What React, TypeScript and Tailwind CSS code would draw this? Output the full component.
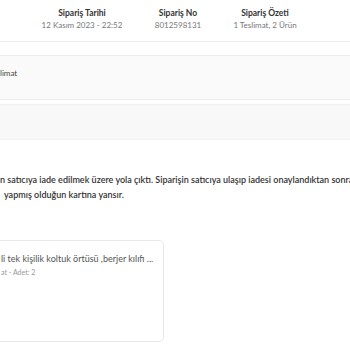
export default function App() {
  const cols = [
    { label: "Sipariş Tarihi", value: "12 Kasım 2023 - 22:52", w: "w-[96px]" },
    { label: "Sipariş No", value: "8012598131", w: "w-[96px]" },
    { label: "Sipariş Özeti", value: "1 Teslimat, 2 Ürün", w: "w-[78px]" },
  ];

  return (
    <div className="h-[350px] w-[350px] overflow-hidden bg-white font-['Lato',sans-serif]">
      <div className="flex h-[42px] border-b border-[#ececec] pl-[34px] pt-[7px]">
        {cols.map((c) => (
          <div key={c.label} className={`${c.w} flex flex-col items-center`}>
            <span className="text-[8.5px] font-bold leading-[12px] text-[#333]">{c.label}</span>
            <span className="text-[8px] leading-[13px] text-[#777]">{c.value}</span>
          </div>
        ))}
      </div>

      <div className="mt-[13px] flex h-[45px] items-center border-y border-[#ececec] bg-[#fafafa]">
        <span className="-mt-[10px] text-[8px] text-[#444]">limat</span>
      </div>

      <div className="mt-[4px] h-[36px] border-y border-[#f0f0f0] bg-[#f8f8f8]" />

      <div className="mt-[34px] flex flex-col gap-[4px] whitespace-nowrap text-[9px] font-semibold leading-[11px] text-[#333]">
        <p>n satıcıya iade edilmek üzere yola çıktı. Siparişin satıcıya ulaşıp iadesi onaylandıktan sonra</p>
        <p className="pl-[4px]">yapmış olduğun kartına yansır.</p>
      </div>

      <div className="-ml-[10px] mt-[40px] h-[102px] w-[174px] rounded-[5px] border border-[#e8e8e8] pl-[10px] pt-[12px]">
        <p className="whitespace-nowrap text-[9px] leading-[12px] text-[#555]">
          li tek kişilik koltuk örtüsü ,berjer kılıfı ...
        </p>
        <p className="mt-[2px] text-[7px] leading-[10px] text-[#999]">at - Adet: 2</p>
      </div>
    </div>
  );
}
